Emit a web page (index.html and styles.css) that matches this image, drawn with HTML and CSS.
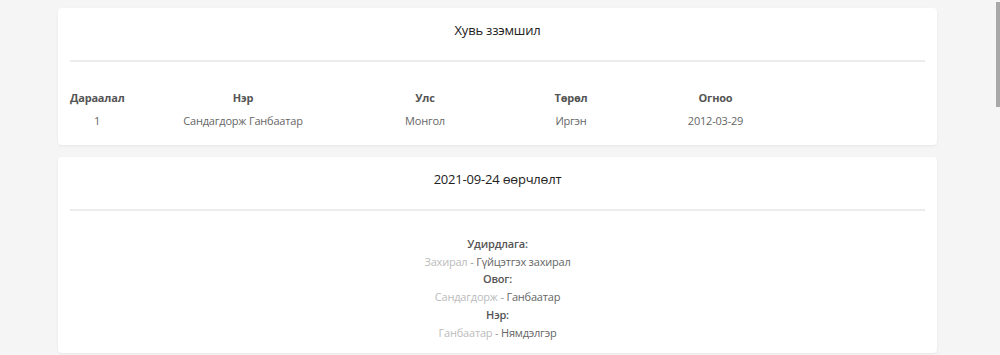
FILE: index.html
```html
<!DOCTYPE html>
<html lang="mn">
<head>
    <meta charset="UTF-8">
    <title>Хувь ззэмшил</title>
    <link rel="stylesheet" href="styles.css">
</head>
<body>

<div class="page">

    <!-- хувь эзэмшил -->
    <div class="card">
        <div class="card-title">Хувь ззэмшил</div>
        <div class="card-line"></div>
        <table class="share-table">
            <colgroup>
                <col class="c1">
                <col class="c2">
                <col class="c3">
                <col class="c4">
                <col class="c5">
            </colgroup>
            <thead>
            <tr>
                <th>Дараалал</th>
                <th>Нэр</th>
                <th>Улс</th>
                <th>Төрөл</th>
                <th>Огноо</th>
            </tr>
            </thead>
            <tbody>
            <tr>
                <td>1</td>
                <td>Сандагдорж Ганбаатар</td>
                <td>Монгол</td>
                <td>Иргэн</td>
                <td>2012-03-29</td>
            </tr>
            </tbody>
        </table>
    </div>

    <!-- өөрчлөлт -->
    <div class="card">
        <div class="card-title">2021-09-24 өөрчлөлт</div>
        <div class="card-line"></div>
        <ul class="change-list">
            <li>
                <div class="change-name">Удирдлага:</div>
                <div class="change-val"><span class="old">Захирал</span> - <span class="new">Гүйцэтгэх захирал</span></div>
            </li>
            <li>
                <div class="change-name">Овог:</div>
                <div class="change-val"><span class="old">Сандагдорж</span> - <span class="new">Ганбаатар</span></div>
            </li>
            <li>
                <div class="change-name">Нэр:</div>
                <div class="change-val"><span class="old">Ганбаатар</span> - <span class="new">Нямдэлгэр</span></div>
            </li>
        </ul>
    </div>

</div>

<!-- гүйлгэх мөрний заагч -->
<div class="scroll-thumb"></div>

</body>
</html>
```

FILE: styles.css
```css
*{
    margin: 0;
    padding: 0;
    list-style: none;
    border: 0;
    box-sizing: border-box;
}

html{
    scrollbar-width: none;
}

body{
    background: #f5f5f5;
    font-family: "Open Sans", "Noto Sans", Arial, sans-serif;
    font-size: 11px;
    letter-spacing: -0.2px;
    color: #666;
    min-height: 1200px;
}

.page{
    width: 879px;
    margin: 0 0 0 58px;
    padding-top: 8px;
    display: flex;
    flex-direction: column;
    gap: 12px;
}

.card{
    background: #fff;
    border-radius: 4px;
    box-shadow: 0 1px 3px rgba(0, 0, 0, 0.06);
    padding: 0 12px;
}

.card-title{
    text-align: center;
    font-size: 13px;
    color: #222;
    height: 52px;
    line-height: 44px;
}

.card-line{
    height: 2px;
    background: #ececec;
}

.share-table{
    margin-top: 24px;
    margin-bottom: 12px;
    border-collapse: collapse;
    table-layout: fixed;
    width: 707px;
}
.share-table .c1{ width: 54px; }
.share-table .c2{ width: 238px; }
.share-table .c3{ width: 126px; }
.share-table .c4{ width: 166px; }
.share-table .c5{ width: 123px; }

.share-table th{
    font-weight: bold;
    color: #555;
    height: 22px;
    text-align: center;
}
.share-table td{
    text-align: center;
    height: 25px;
}

.change-list{
    padding: 24px 0 12px;
    text-align: center;
    line-height: 17.7px;
}
.change-name{
    font-weight: 600;
    color: #555;
}
.change-val{
    color: #999;
}
.change-val .old{
    color: #bbb;
}
.change-val .new{
    color: #666;
}

.scroll-thumb{
    position: fixed;
    top: 2px;
    right: 0;
    width: 4px;
    height: 105px;
    background: #a8a8a8;
}
```
